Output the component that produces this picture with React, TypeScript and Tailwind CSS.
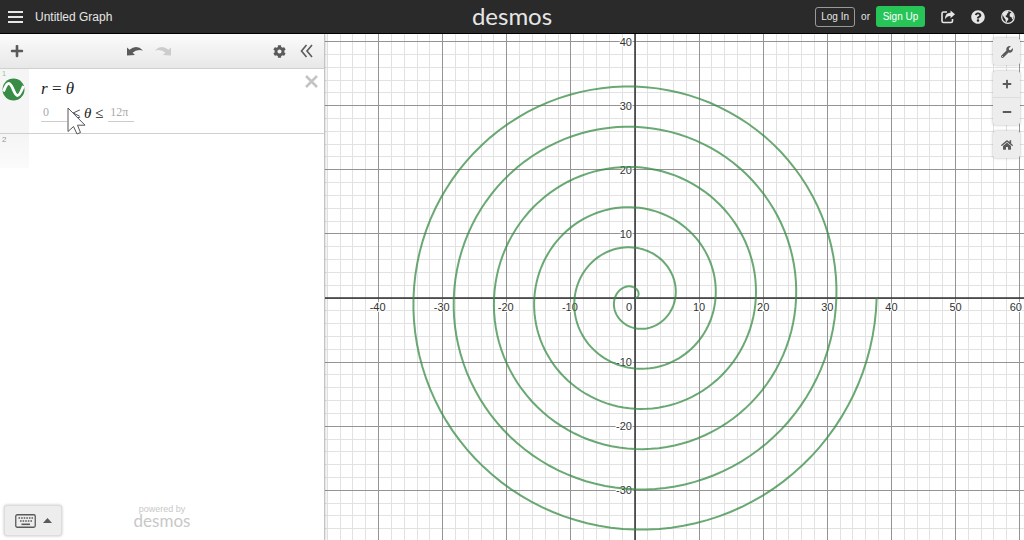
import React, { useState } from "react";
import {
  FaCog,
  FaHome,
  FaMinus,
  FaPlus,
  FaQuestionCircle,
  FaWrench,
} from "react-icons/fa";

// Graph paper settings, in pixels per unit and pixels from the top left
const SCALE = 6.41;
const ORIGIN_X = 310;
const ORIGIN_Y = 264;

const px = (x: number) => ORIGIN_X + x * SCALE;
const py = (y: number) => ORIGIN_Y - y * SCALE;

const range = (from: number, to: number, step: number) => {
  const values: number[] = [];
  for (let v = from; v <= to; v += step) values.push(v);
  return values;
};

const spiralPath = (turns: number) => {
  const steps = turns * 120;
  const points: string[] = [];
  for (let i = 0; i <= steps; i++) {
    const t = (i / steps) * turns * 2 * Math.PI;
    points.push(
      `${px(t * Math.cos(t)).toFixed(2)} ${py(t * Math.sin(t)).toFixed(2)}`,
    );
  }
  return `M${points.join("L")}`;
};

const lineColor = (v: number) => (v % 10 === 0 ? "#949494" : "#e2e2e2");

const GraphPaper: React.FC = () => {
  return (
    <svg
      className="block w-full h-full font-['Liberation_Sans',Arial,sans-serif] text-[11px]"
      role="img"
      aria-label="Graph of r = θ"
    >
      {/* Grid */}
      {range(-48, 140, 2)
        .sort((a, b) => Number(a % 10 === 0) - Number(b % 10 === 0))
        .map((v) => (
          <g key={v} stroke={lineColor(v)} shapeRendering="crispEdges">
            <line x1={px(v)} x2={px(v)} y1="0" y2="100%" />
            <line x1="0" x2="100%" y1={py(-v)} y2={py(-v)} />
            <line x1="0" x2="100%" y1={py(v)} y2={py(v)} />
          </g>
        ))}

      {/* Axes */}
      <g stroke="#333333" strokeWidth="1.5">
        <line x1={px(0)} x2={px(0)} y1="0" y2="100%" />
        <line x1="0" x2="100%" y1={py(0)} y2={py(0)} />
      </g>

      {/* Labels */}
      <g
        fill="#333333"
        stroke="#ffffff"
        strokeWidth="2"
        strokeLinejoin="round"
        paintOrder="stroke"
      >
        {[-40, -30, -20, -10, 10, 20, 30, 40, 50].map((v) => (
          <text
            key={v}
            x={px(v) - (v < 0 ? 1 : 0)}
            y={py(0) + 13}
            textAnchor="middle"
          >
            {v}
          </text>
        ))}
        <text x="100%" dx="-2" y={py(0) + 13} textAnchor="end">
          60
        </text>
        <text x={px(0) - 3} y={py(0) + 13} textAnchor="end">
          0
        </text>
        {[40, 30, 20, 10, -10, -20, -30].map((v) => (
          <text key={v} x={px(0) - 3} y={py(v) + 4} textAnchor="end">
            {v}
          </text>
        ))}
      </g>

      <path
        d={spiralPath(6)}
        fill="none"
        stroke="#388c46"
        strokeOpacity="0.75"
        strokeWidth="2"
      />
    </svg>
  );
};

const Header: React.FC = () => {
  return (
    <header className="grid grid-cols-[1fr_auto_1fr] items-center h-[34px] shrink-0 bg-[#2a2a2a] border-b border-black text-[#e6e6e6] text-xs">
      <div className="flex items-center gap-3 pl-2">
        <button
          aria-label="Open menu"
          className="flex flex-col gap-[3px] w-[15px]"
        >
          <span className="w-full h-[2px] bg-[#e6e6e6]" />
          <span className="w-full h-[2px] bg-[#e6e6e6]" />
          <span className="w-full h-[2px] bg-[#e6e6e6]" />
        </button>
        <span>Untitled Graph</span>
      </div>
      <div className="pb-0.5 font-['Lato',sans-serif] text-2xl leading-7">
        desmos
      </div>
      <div className="flex items-center justify-end pr-[9px]">
        <button className="w-10 h-5 rounded-[3px] border border-[#999999] text-[10px]">
          Log In
        </button>
        <span className="px-1.5 text-[10px]">or</span>
        <button className="w-[49px] h-[21px] rounded-[3px] bg-[#27c458] text-white text-[10px]">
          Sign Up
        </button>
        <div className="flex items-center gap-4 pl-4">
          <button aria-label="Share">
            <svg width="14" height="14" viewBox="0 0 14 14" fill="none">
              <path
                d="M6 2H2.500Q1 2 1 3.500V11Q1 12.500 2.500 12.500H10Q11.500 12.500 11.500 11V9"
                stroke="currentColor"
                strokeWidth="1.600"
              />
              <path
                d="M9.500 0.500L14 4.300L9.500 8.200V6Q5.500 5.800 4.200 9.500Q3.500 3 9.500 2.700Z"
                fill="currentColor"
              />
            </svg>
          </button>
          <button aria-label="Help">
            <FaQuestionCircle size={14} />
          </button>
          <button aria-label="Language">
            <svg width="14" height="14" viewBox="0 0 14 14">
              <circle
                cx="7"
                cy="7"
                r="6.300"
                fill="none"
                stroke="currentColor"
                strokeWidth="1.200"
              />
              <path
                d="M2 3.500L4 1.500L7 1L7.500 2.500L5.800 4L6 5L4.500 5.800L5 7L7.200 8L7.300 9.500L6 11.300L5.600 12.500L4.800 12L4.500 9.500L3 7.500L2 5.500Z"
                fill="currentColor"
              />
              <path
                d="M9.200 3.200L11 2.500L12.800 5.500L12.300 8L11.200 9.800L10.600 7.300L8.800 6.600L8.600 4.800Z"
                fill="currentColor"
              />
            </svg>
          </button>
        </div>
      </div>
    </header>
  );
};

const Toolbar: React.FC = () => {
  return (
    <div className="flex items-center h-[35px] pl-[10px] pr-[11px] border-b border-[#d0d0d0] bg-linear-to-b from-[#fbfbfb] to-[#e8e8e8] text-[#5a5a5a]">
      <button aria-label="Add item" className="w-[117px]">
        <FaPlus size={14} />
      </button>
      <div className="flex gap-3">
        <button aria-label="Undo">
          <svg width="16" height="10" viewBox="0 0 16 10" fill="currentColor">
            <path d="M0 1.500V9.500L8 9L5.600 6.700Q9.500 2.800 16 4.500Q9.500-2 2.500 3.800Z" />
          </svg>
        </button>
        <button aria-label="Redo" className="text-[#cccccc]">
          <svg width="16" height="10" viewBox="0 0 16 10" fill="currentColor">
            <path d="M16 1.500V9.500L8 9L10.400 6.700Q6.500 2.800 0 4.500Q6.500-2 13.500 3.800Z" />
          </svg>
        </button>
      </div>
      <div className="flex flex-1 items-center justify-end gap-3.5">
        <button aria-label="Edit list">
          <FaCog size={13} />
        </button>
        <button aria-label="Hide list">
          <svg
            width="13"
            height="14"
            viewBox="0 0 13 14"
            fill="none"
            stroke="currentColor"
            strokeWidth="1.600"
          >
            <path d="M6.500 1L1.500 7L6.500 13M12 1L7 7L12 13" />
          </svg>
        </button>
      </div>
    </div>
  );
};

const ExpressionList: React.FC = () => {
  const [from, setFrom] = useState("0");
  const [to, setTo] = useState("12π");

  return (
    <div className="font-['Liberation_Serif','Times_New_Roman',serif]">
      {/* First expression */}
      <div className="relative flex h-[65px] border-b border-[#d0d0d0]">
        <div className="w-[29px] shrink-0 bg-[#f5f5f5] pl-0.5">
          <div className="h-[9px] font-['Liberation_Sans',Arial,sans-serif] text-[7px] leading-[9px] text-[#8fc49a]">
            1
          </div>
          <button aria-label="Hide expression" className="block">
            <svg width="23" height="23" viewBox="0 0 23 23">
              <circle cx="11.500" cy="11.500" r="11" fill="#388c46" />
              <path
                d="M1.500 13.500C3.500 8 5.500 4 8 6C11 8.500 12.500 17.500 15.500 17.500C18 17.500 19.500 12.500 21.500 8"
                fill="none"
                stroke="#ffffff"
                strokeWidth="2.800"
              />
            </svg>
          </button>
        </div>
        <div className="pl-3 pt-2 text-[#222222]">
          <div className="text-[17px] leading-6">
            <i>r</i> = <i>θ</i>
          </div>
          <div className="flex items-center h-6 text-[15px]">
            <input
              aria-label="Minimum θ"
              value={from}
              onChange={(e) => setFrom(e.target.value)}
              className="w-[26px] h-[18px] pl-0.5 border-b border-[#cccccc] text-xs text-[#aaaaaa] outline-none"
            />
            <span className="px-[5px]">
              ≤ <i>θ</i> ≤
            </span>
            <input
              aria-label="Maximum θ"
              value={to}
              onChange={(e) => setTo(e.target.value)}
              className="w-[26px] h-[18px] pl-0.5 border-b border-[#cccccc] text-xs text-[#aaaaaa] outline-none"
            />
          </div>
        </div>
        <button
          aria-label="Delete expression"
          className="absolute right-1.5 top-1.5 text-[#c4c4c4]"
        >
          <svg
            width="13"
            height="13"
            viewBox="0 0 13 13"
            stroke="currentColor"
            strokeWidth="2.600"
          >
            <path d="M1 1L12 12M12 1L1 12" />
          </svg>
        </button>
        {/* Pointer */}
        <svg
          className="absolute left-[67px] top-[38px]"
          width="20"
          height="28"
          viewBox="0 0 20 28"
          fill="#ffffff"
          stroke="#555555"
        >
          <path d="M1 1V24.500L6.500 19.500L10 27L13.500 25.500L10.500 18.200H18Z" />
        </svg>
      </div>

      {/* Empty expression */}
      <div className="flex h-[34px]">
        <div className="w-[29px] pl-0.5 bg-linear-to-b from-[#f5f5f5] to-[#fbfbfb] font-['Liberation_Sans',Arial,sans-serif] text-[8px] leading-[11px] text-[#999999]">
          2
        </div>
      </div>
    </div>
  );
};

const PANEL_BUTTON =
  "flex items-center justify-center w-[27px] h-[27px] text-[#5a5a5a]";

const App: React.FC = () => {
  return (
    <div className="flex flex-col h-screen bg-white font-['Liberation_Sans',Arial,sans-serif] overflow-hidden">
      <Header />
      <main className="flex flex-1 min-h-0">
        <aside className="relative z-10 flex flex-col w-[325px] shrink-0 border-r border-[#c4c4c4] shadow-[0_0_3px_rgba(0,0,0,0.25)] bg-white">
          <Toolbar />
          <ExpressionList />
          <div className="grid grid-cols-[1fr_auto_1fr] items-end mt-auto px-1 pb-1">
            <button
              aria-label="Show keypad"
              className="flex items-center justify-center gap-[7px] w-[58px] h-[31px] rounded-[3px] border border-[#dddddd] bg-[#ededed] shadow-[0_0_3px_rgba(0,0,0,0.25)] text-[#5a5a5a]"
            >
              <svg width="21" height="14" viewBox="0 0 21 14" fill="none">
                <rect
                  x="0.750"
                  y="0.750"
                  width="19.500"
                  height="12.500"
                  rx="1.500"
                  stroke="currentColor"
                  strokeWidth="1.300"
                />
                <path
                  d="M3.500 4H18M5 7H17"
                  stroke="currentColor"
                  strokeWidth="1.600"
                  strokeDasharray="1.600 1"
                />
                <path
                  d="M6.500 10.300H15"
                  stroke="currentColor"
                  strokeWidth="1.600"
                />
              </svg>
              <svg width="9" height="5" viewBox="0 0 9 5" fill="currentColor">
                <path d="M4.500 0L9 5H0Z" />
              </svg>
            </button>
            <div className="pb-2 text-center text-[#c8c8c8]">
              <div className="text-[9px] leading-[9px]">powered by</div>
              <div className="font-['Lato',sans-serif] text-[17px] leading-[14px]">
                desmos
              </div>
            </div>
          </div>
        </aside>

        <section className="relative flex-1 min-w-0">
          <GraphPaper />
          {/* Graph controls */}
          <div className="absolute right-1 top-1 flex flex-col gap-1.5">
            <div className="rounded-[3px] bg-[#ededed] shadow-[0_0_3px_rgba(0,0,0,0.3)]">
              <button aria-label="Graph settings" className={PANEL_BUTTON}>
                <FaWrench size={12} />
              </button>
            </div>
            <div className="rounded-[3px] bg-[#ededed] shadow-[0_0_3px_rgba(0,0,0,0.3)] divide-y divide-[#dddddd]">
              <button aria-label="Zoom in" className={PANEL_BUTTON}>
                <FaPlus size={10} />
              </button>
              <button aria-label="Zoom out" className={PANEL_BUTTON}>
                <FaMinus size={10} />
              </button>
            </div>
            <div className="rounded-[3px] bg-[#ededed] shadow-[0_0_3px_rgba(0,0,0,0.3)]">
              <button aria-label="Default view" className={PANEL_BUTTON}>
                <FaHome size={12} />
              </button>
            </div>
          </div>
        </section>
      </main>
    </div>
  );
};

export default App;
